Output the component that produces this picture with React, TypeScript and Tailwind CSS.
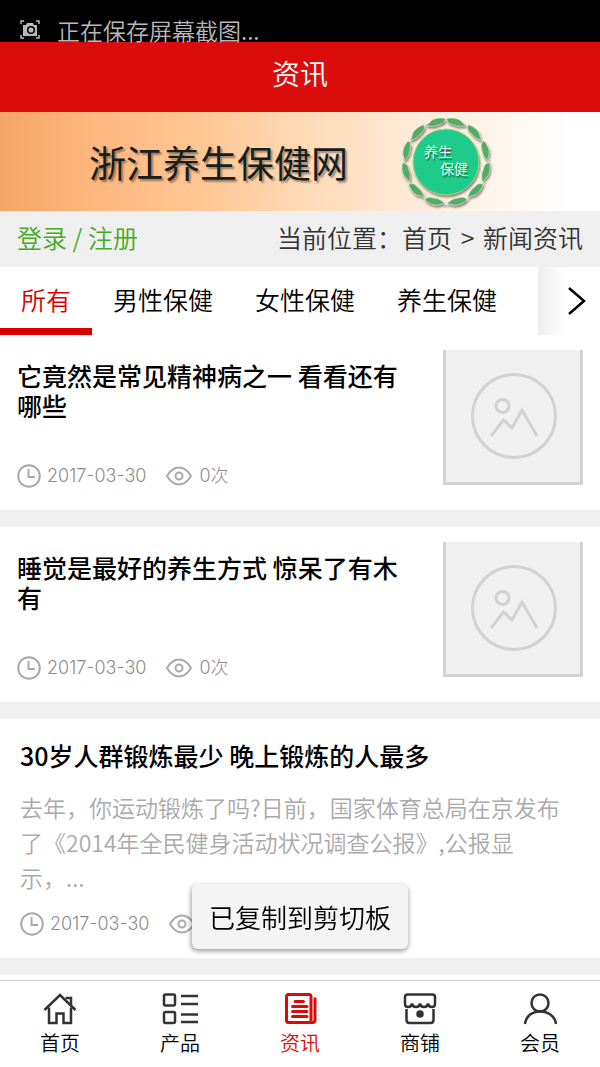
import type { ReactNode } from "react";

const categorias = ["所有", "男性保健", "女性保健", "养生保健"];

const artigos = [
    {
        titulo: "它竟然是常见精神病之一 看看还有哪些",
        data: "2017-03-30",
        vistas: "0次",
    },
    {
        titulo: "睡觉是最好的养生方式 惊呆了有木有",
        data: "2017-03-30",
        vistas: "0次",
    },
]

const resumo = ["去年，你运动锻炼了吗?日前，国家体育总局在京发布", "了《2014年全民健身活动状况调查公报》,公报显", "示，..."];

const menu: { nome: string; icone: ReactNode; ativo?: boolean }[] = [
    {
        nome: "首页",
        icone: <>
            <path d="M2.500 18 18 3l15.500 15" />
            <path d="M7 15.500V31h7.500v-9.500h7V31H29V15.500" />
            <path d="M23.500 6H29v7" />
        </>,
    },
    {
        nome: "产品",
        icone: <>
            <rect x="2" y="2.500" width="11" height="11" rx="1.500" />
            <rect x="2" y="20" width="11" height="11" rx="1.500" />
            <path d="M19 4h17M19 12h17M19 22.500h17M19 30h17" />
        </>,
    },
    {
        nome: "资讯",
        ativo: true,
        icone: <>
            <rect x="4.500" y="2.500" width="24.500" height="28" rx="2" strokeWidth="3" />
            <path d="M33 5.500V28q0 2.500-2.500 2.500H27" strokeWidth="3" />
            <path d="M13 9.500h8.500M10.500 14.500h14.500M10.500 19.500h14.500M10.500 24.500h14.500" strokeWidth="3" strokeLinecap="round" />
        </>,
    },
    {
        nome: "商铺",
        icone: <>
            <path d="M5.500 2.500h25q2.500 0 2.500 2.500v7q0 3-3 3-3.500 0-4-3.500-.5 3.500-4 3.500t-4-3.500q-.5 3.500-4 3.500t-4-3.500Q9.500 15 6 15q-3 0-3-3V5q0-2.500 2.500-2.500Z" />
            <path d="M4.500 17v11q0 3 3 3h21q3 0 3-3V17" />
            <circle cx="18" cy="22" r="2.500" fill="currentColor" />
        </>,
    },
    {
        nome: "会员",
        icone: <>
            <circle cx="18" cy="11" r="8.500" />
            <path d="M3 32c1-8 7-12.500 15-12.500S33 24 34 32" />
        </>,
    },
]

function Meta({ data, vistas }: { data: string; vistas: string }) {
    return <div className="flex items-center h-6 font-['Inter','Noto_Sans_CJK_SC',sans-serif] text-lg leading-6 font-light text-[#8c8c8c]">
        <svg viewBox="0 0 24 24" className="size-6 mr-[6px] text-[#aaa]" fill="none" stroke="currentColor" strokeWidth="2">
            <circle cx="12" cy="12" r="10.800" />
            <path d="M11.500 5v8H18" />
        </svg>
        <time>{data}</time>
        <svg viewBox="0 0 26 20" className="w-[26px] h-5 ml-5 mr-[7px] text-[#aaa]" fill="none" stroke="currentColor" strokeWidth="2">
            <path d="M1 10Q6 1.500 13 1.500T25 10Q20 18.500 13 18.500T1 10Z" />
            <circle cx="13" cy="10" r="3.500" />
        </svg>
        <span>{vistas}</span>
    </div>
}

function SemImagem() {
    return <svg viewBox="0 0 140 135" className="w-[140px] shrink-0" fill="none" stroke="#d2d2d2" strokeWidth="3">
        <path d="M0 0h140v135H0Z" fill="#f0f0f0" stroke="none" />
        <path d="M1.500 0v133.500h137V0" />
        <circle cx="71" cy="66" r="41.500" />
        <circle cx="59.500" cy="56" r="6.500" />
        <path d="m48 86 12.500-16 8.500 8 10-18 15 26" />
    </svg>
}

function Selo() {
    return <div className="relative size-[92px]">
        <svg viewBox="0 0 92 92" className="size-full drop-shadow-[1px_2px_1px_rgba(0,0,0,0.45)]">
            {["", "translate(92 0) scale(-1 1)"].map((lado) => (
                <g key={lado} transform={lado} fill="#52ad62" stroke="#eef6e4" strokeWidth=".6">
                    {[0, 30, 60, 90, 120, 150].map((angulo) => (
                        <path key={angulo} d="M46.500 2.500C54 1 60 3 62 6c1.500 2 3.500 3 5.500 3C62 11 57 10.500 54 9c-3-1.500-6 0-7.500-6.500Z" transform={`rotate(${angulo} 46 46)`} />
                    ))}
                </g>
            ))}
            <circle cx="46" cy="46" r="33" fill="#1fcb8b" stroke="#a9d86e" />
        </svg>
        <div className="absolute inset-0 flex flex-col justify-center px-6 pb-1 text-sm leading-[17px] text-white [text-shadow:1px_2px_1px_rgba(0,0,0,0.5)]">
            <span>养生</span>
            <span className="self-end">保健</span>
        </div>
    </div>
}

function App() {
    return <div className="min-h-screen bg-white pb-[87px] font-['Noto_Sans_CJK_SC',sans-serif] font-[350] text-black">
        <div className="flex items-start h-[42px] pl-5 pt-[18px] bg-black text-[23px] leading-6 text-[#b8b8b8]">
            <svg viewBox="0 0 20 20" className="size-5 mt-[2px] mr-[17px]" fill="none" stroke="currentColor" strokeWidth="1.500">
                <path d="M1 4V1h3M16 1h3v3M1 15v3h3M16 18h3v-3" />
                <path d="M3 5h3l1-2h6l1 2h3v11H3Z" fill="currentColor" stroke="none" />
                <circle cx="11" cy="10" r="3.300" stroke="#000" />
            </svg>
            正在保存屏幕截图...
        </div>

        <header className="bg-[#db0c0c] text-white text-center">
            <h1 className="text-[28px] leading-[62px] pb-2">资讯</h1>
        </header>

        <div className="flex items-center h-[99px] pl-[89px] bg-[linear-gradient(90deg,#f2a566_0%,#ffb77d_15%,#ffc896_35%,#ffdcb8_52%,#ffeedf_73%,#fff_95%)]">
            <p className="mr-[52px] text-[37px] leading-[50px] font-normal text-[#142020] [text-shadow:2px_2px_2px_rgba(0,0,0,0.4)]">浙江养生保健网</p>
            <Selo />
        </div>

        <div className="flex justify-between h-14 px-[17px] bg-[#efefef] text-[25px] leading-[52px] text-[#333]">
            <p className="text-[#43ac1e]"><a href="#login">登录</a> / <a href="#registro">注册</a></p>
            <p>当前位置：<a href="#inicio">首页</a><span className="mx-[3px]"> &gt; </span><a href="#noticias">新闻资讯</a></p>
        </div>

        <div className="flex h-[68px]">
            <nav className="flex flex-1 overflow-hidden text-[25px] leading-[64px]">
                {categorias.map((cat, i) => (
                    <a key={cat} href="#lista" className={`shrink-0 px-[21px] ${i === 0 ? "border-b-[7px] border-[#d90000] text-[#d90000]" : ""}`}>{cat}</a>
                ))}
            </nav>
            <button aria-label="更多" className="w-[62px] pl-7 bg-linear-to-r from-[#ededed] to-white to-45%">
                <svg viewBox="0 0 20 32" className="w-5 h-8" fill="none" stroke="currentColor" strokeWidth="2.500">
                    <path d="m3 3 15 13L3 29" />
                </svg>
            </button>
        </div>

        <main className="flex flex-col gap-[17px] bg-[#f0f0f0]">
            {artigos.map((artigo) => (
                <article key={artigo.titulo} className="flex justify-between items-start bg-white px-[17px] pt-[15px] pb-[22px]">
                    <div className="flex-1 pt-[10px] pr-10">
                        <h2 className="h-[60px] mb-11 text-[25px] leading-[30px] font-medium">{artigo.titulo}</h2>
                        <Meta data={artigo.data} vistas={artigo.vistas} />
                    </div>
                    <SemImagem />
                </article>
            ))}
            <article className="bg-white px-5 pt-[21px] pb-[22px]">
                <h2 className="text-[25px] leading-[30px] font-medium">30岁人群锻炼最少 晚上锻炼的人最多</h2>
                <p className="mt-5 mb-[17px] text-[23px] leading-[35px] text-[#aaa]">
                    {resumo.map((linha) => <span key={linha} className="block">{linha}</span>)}
                </p>
                <Meta data="2017-03-30" vistas="0次" />
            </article>
            <div className="h-1 bg-white" />
        </main>

        <div role="status" className="fixed bottom-[118px] left-1/2 -translate-x-1/2 px-[17px] rounded-md bg-[#f4f4f4] text-[26px] leading-[65px] whitespace-nowrap shadow-[0_2px_5px_rgba(0,0,0,0.4)]">已复制到剪切板</div>

        <nav className="fixed bottom-0 inset-x-0 flex h-[87px] pt-[11px] bg-white border-t border-[#d5d5d5]">
            {menu.map((item) => (
                <a key={item.nome} href="#menu" className={`flex-1 flex flex-col items-center text-xl leading-[30px] ${item.ativo ? "text-[#dd0a0a]" : "text-black"}`}>
                    <svg viewBox="0 0 36 36" className={`size-9 ${item.ativo ? "" : "text-[#333]"}`} fill="none" stroke="currentColor" strokeWidth="2.500">{item.icone}</svg>
                    {item.nome}
                </a>
            ))}
        </nav>
    </div>
}

export default App
